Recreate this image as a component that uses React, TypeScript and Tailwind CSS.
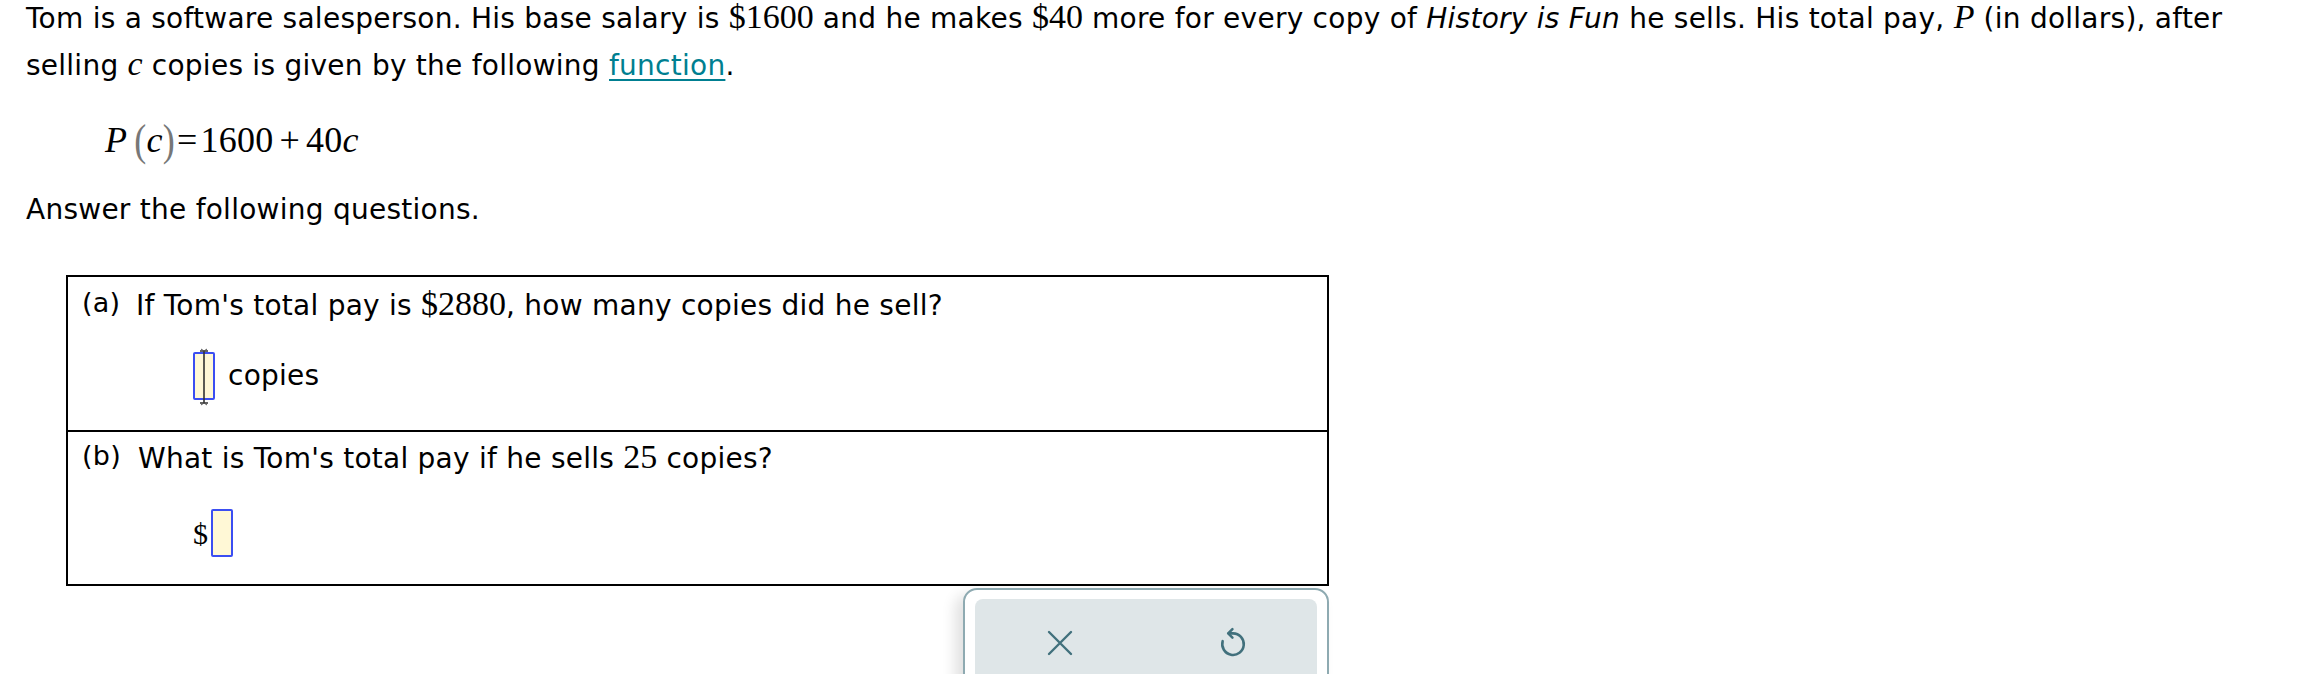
const sans = "font-['DejaVu_Sans',Verdana,sans-serif]";
const serif = "font-['Liberation_Serif','Times_New_Roman',serif]";

function M({ children, italic }: { children: React.ReactNode; italic?: boolean }) {
  return <span className={`${serif} text-[34px] tracking-normal ${italic ? "italic" : ""}`}>{children}</span>;
}

function AnswerBox({ caret }: { caret?: boolean }) {
  return (
    <span className="relative inline-block w-[22px] h-[48px] border-2 border-[#3b4ef2] rounded-[2px] bg-[#fff8d6] align-middle">
      {caret && (
        <svg className="absolute left-[0px] -top-[6px]" width="18" height="58" viewBox="0 0 18 58">
          <path d="M5 3h8M5 55h8M9 3v52" stroke="#333" strokeWidth="1.6" fill="none" />
          <path d="M6 1l3 2 3-2M6 57l3-2 3 2" stroke="#555" strokeWidth="1" fill="none" />
        </svg>
      )}
    </span>
  );
}

function CloseIcon() {
  return (
    <svg width="30" height="30" viewBox="0 0 30 30" fill="none" stroke="#41707c" strokeWidth="2.4" strokeLinecap="round">
      <path d="M4 4l22 22M26 4L4 26" />
    </svg>
  );
}

function UndoIcon() {
  return (
    <svg width="34" height="34" viewBox="0 0 24 24" fill="none" stroke="#41707c" strokeWidth="1.8" strokeLinecap="round" strokeLinejoin="round">
      <path d="M9 5.2h3a7.6 7.6 0 1 1-7.3 5.5" />
      <path d="M11.6 2.2L8.6 5.2l3 3" />
    </svg>
  );
}

export default function App() {
  return (
    <div className={`${sans} text-[28px] tracking-[0.25px] text-black bg-white w-[2298px] h-[674px] overflow-hidden`}>
      <div className="pl-[26px]">
        <p className="leading-[34px] whitespace-nowrap">
          Tom is a software salesperson. His base salary is <M>$1600</M> and he makes <M>$40</M> more for every copy of{" "}
          <i>History is Fun</i> he sells. His total pay, <M italic>P</M> (in dollars), after
        </p>
        <p className="leading-[45px] mt-[5px]">
          selling <M italic>c</M> copies is given by the following{" "}
          <span className="text-[#007f91] underline decoration-[2px] underline-offset-[4px]">function</span>.
        </p>

        <div className={`${serif} text-[36px] leading-[45px] mt-[30px] ml-[79px] flex items-center`}>
          <i>P</i>
          <span className="text-[#777] ml-[7px] scale-y-125 inline-block">(</span>
          <i>c</i>
          <span className="text-[#777] scale-y-125 inline-block">)</span>
          <span className="ml-[2px] mr-[3px]">=</span>1600<span className="ml-[6px] mr-[6px]">+</span>40<i>c</i>
        </div>

        <p className="leading-[45px] mt-[24px]">Answer the following questions.</p>
      </div>

      <div className="ml-[66px] mt-[43px] w-[1263px]">
        <div className="border-2 border-black">
          <div className="h-[153px] pl-[14px] pt-[9px]">
            <div className="flex items-baseline leading-[36px]">
              <span className="text-[27px] w-[54px] -translate-y-[3px]">(a)</span>
              <span>
                If Tom's total pay is <M>$2880</M>, how many copies did he sell?
              </span>
            </div>
            <div className="flex items-center gap-[13px] ml-[111px] mt-[28px]">
              <AnswerBox caret />
              <span>copies</span>
            </div>
          </div>
          <div className="h-[154px] border-t-2 border-black pl-[14px] pt-[7px]">
            <div className="flex items-baseline leading-[36px]">
              <span className="text-[27px] w-[56px] -translate-y-[3px]">(b)</span>
              <span>
                What is Tom's total pay if he sells <M>25</M> copies?
              </span>
            </div>
            <div className="flex items-center gap-[3px] ml-[111px] mt-[32px]">
              <span className={`${serif} text-[30px]`}>$</span>
              <AnswerBox />
            </div>
          </div>
        </div>

        <div className="flex justify-end mt-[2px]">
          <div className="w-[366px] h-[120px] border-2 border-[#8eaab1] rounded-[14px] bg-white px-[10px] pt-[9px] shadow-[-8px_6px_14px_rgba(0,0,0,0.12)]">
            <div className="h-[110px] rounded-[8px] bg-[#dfe6e8] pt-[27px]">
              <div className="flex items-center h-[34px] pl-[70px] gap-[141px]">
                <CloseIcon />
                <UndoIcon />
              </div>
            </div>
          </div>
        </div>
      </div>
    </div>
  );
}
